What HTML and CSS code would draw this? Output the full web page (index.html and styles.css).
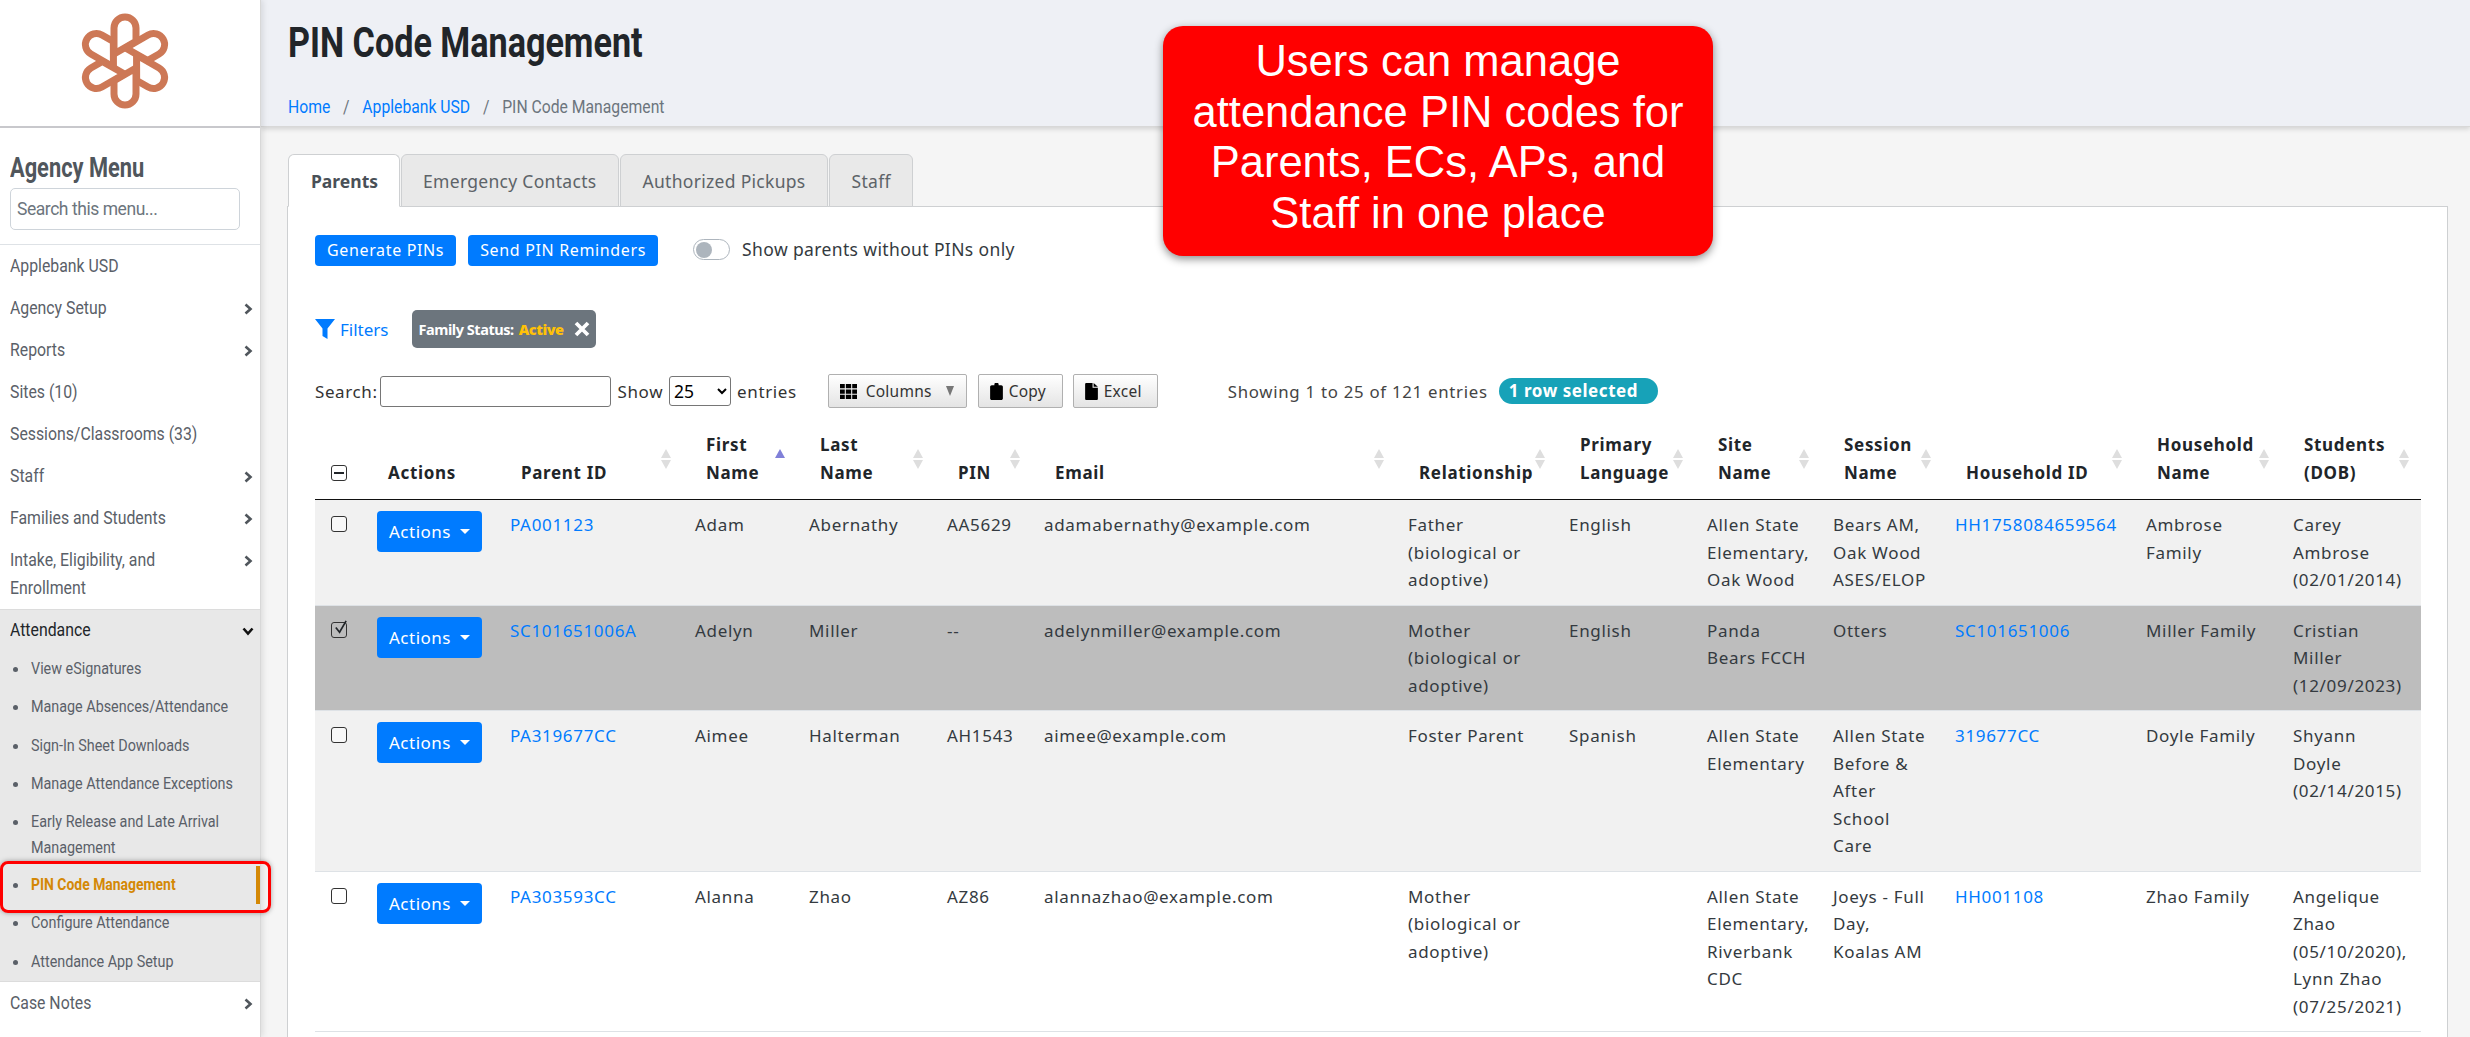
FILE: index.html
```html
<!DOCTYPE html>
<html lang="en">
<head>
<meta charset="utf-8">
<title>PIN Code Management</title>
<link rel="stylesheet" href="styles.css">
</head>
<body>
<div class="page">
  <aside class="sidebar">
    <div class="logo">
      <svg class="logo-svg" viewBox="-50 -50 100 100" aria-hidden="true">
        <g class="petals">
          <path d="M-11,-7 V-33 A11 11 0 0 1 11,-33 V-19.800 Z"/>
          <path transform="rotate(60)" d="M-11,-7 V-33 A11 11 0 0 1 11,-33 V-19.800 Z"/>
          <path transform="rotate(120)" d="M-11,-7 V-33 A11 11 0 0 1 11,-33 V-19.800 Z"/>
          <path transform="rotate(180)" d="M-11,-7 V-33 A11 11 0 0 1 11,-33 V-19.800 Z"/>
          <path transform="rotate(240)" d="M-11,-7 V-33 A11 11 0 0 1 11,-33 V-19.800 Z"/>
          <path transform="rotate(300)" d="M-11,-7 V-33 A11 11 0 0 1 11,-33 V-19.800 Z"/>
        </g>
      </svg>
    </div>
    <div class="menu-head">
      <div class="menu-title">Agency Menu</div>
      <input class="menu-search" type="text" placeholder="Search this menu...">
    </div>
    <nav class="menu">
      <a class="item"><span class="cn">Applebank USD</span></a>
      <a class="item has-chev"><span class="cn">Agency Setup</span><svg class="chev" viewBox="0 0 10 12"><path d="M2.5 1.5 7.5 6 2.5 10.5"/></svg></a>
      <a class="item has-chev"><span class="cn">Reports</span><svg class="chev" viewBox="0 0 10 12"><path d="M2.5 1.5 7.5 6 2.5 10.5"/></svg></a>
      <a class="item"><span class="cn">Sites (10)</span></a>
      <a class="item"><span class="cn">Sessions/Classrooms (33)</span></a>
      <a class="item has-chev"><span class="cn">Staff</span><svg class="chev" viewBox="0 0 10 12"><path d="M2.5 1.5 7.5 6 2.5 10.5"/></svg></a>
      <a class="item has-chev"><span class="cn">Families and Students</span><svg class="chev" viewBox="0 0 10 12"><path d="M2.5 1.5 7.5 6 2.5 10.5"/></svg></a>
      <a class="item has-chev multi"><span class="cn item-label">Intake, Eligibility, and Enrollment</span><svg class="chev" viewBox="0 0 10 12"><path d="M2.5 1.5 7.5 6 2.5 10.5"/></svg></a>
      <div class="group">
        <a class="item group-head"><span class="cn">Attendance</span><svg class="chev chev-dark" viewBox="0 0 12 10"><path d="M1.5 2.5 6 7.5 10.5 2.5"/></svg></a>
        <ul class="sub">
          <li><span class="cn-sub">View eSignatures</span></li>
          <li><span class="cn-sub">Manage Absences/Attendance</span></li>
          <li><span class="cn-sub">Sign-In Sheet Downloads</span></li>
          <li><span class="cn-sub">Manage Attendance Exceptions</span></li>
          <li><span class="cn-sub">Early Release and Late Arrival Management</span></li>
          <li class="current"><span class="cn-sub">PIN Code Management</span></li>
          <li><span class="cn-sub">Configure Attendance</span></li>
          <li><span class="cn-sub">Attendance App Setup</span></li>
        </ul>
      </div>
      <a class="item has-chev"><span class="cn">Case Notes</span><svg class="chev" viewBox="0 0 10 12"><path d="M2.5 1.5 7.5 6 2.5 10.5"/></svg></a>
    </nav>
    <div class="sidebar-mark"></div>
  </aside>

  <main class="main">
    <header class="topbar">
      <h1 class="title">PIN Code Management</h1>
      <div class="crumbs"><a>Home</a><span class="sep">/</span><a>Applebank USD</a><span class="sep">/</span><span class="crumb-now">PIN Code Management</span></div>
    </header>

    <section class="content">
      <div class="tabs">
        <div class="tab active">Parents</div>
        <div class="tab">Emergency Contacts</div>
        <div class="tab">Authorized Pickups</div>
        <div class="tab">Staff</div>
      </div>
      <div class="card">
        <div class="actions-row">
          <button class="btn-blue">Generate PINs</button>
          <button class="btn-blue">Send PIN Reminders</button>
          <span class="switch"><span class="knob"></span></span>
          <span class="switch-label">Show parents without PINs only</span>
        </div>
        <div class="filter-row">
          <a class="filters"><svg class="funnel" viewBox="0 0 20 20"><path d="M0 0H20L12.5 9.5V20L7.5 17V9.5Z"/></svg>Filters</a>
          <span class="chip">Family Status: <b class="chip-val">Active</b><svg class="chip-x" viewBox="0 0 12 12"><path d="M1.5 1.5 10.500 10.500M10.500 1.500 1.500 10.500"/></svg></span>
        </div>
        <div class="dt-row">
          <label class="dt-label">Search:</label>
          <input class="dt-search" type="text">
          <label class="dt-label dt-show">Show</label>
          <select class="dt-select"><option>25</option></select>
          <label class="dt-label dt-entries">entries</label>
          <button class="dt-btn dt-columns"><svg class="ico" viewBox="0 0 16 14"><path d="M0 0H4.500V4H0ZM5.500 0H10.500V4H5.500ZM11.500 0H16V4H11.500ZM0 5H4.500V9H0ZM5.500 5H10.500V9H5.500ZM11.500 5H16V9H11.500ZM0 10H4.500V14H0ZM5.500 10H10.500V14H5.500ZM11.500 10H16V14H11.500Z"/></svg>Columns<i class="dt-caret"></i></button>
          <button class="dt-btn dt-copy"><svg class="ico ico-small" viewBox="0 0 12 16"><path d="M1.500 2H4V1.200C4 .5 4.500 0 5.200 0H6.800C7.500 0 8 .5 8 1.200V2H10.500C11.300 2 12 2.700 12 3.500V14.500C12 15.300 11.300 16 10.500 16H1.500C.7 16 0 15.300 0 14.500V3.500C0 2.700 .7 2 1.500 2Z"/></svg>Copy</button>
          <button class="dt-btn dt-excel"><svg class="ico ico-small" viewBox="0 0 12 16"><path d="M0 1.200C0 .5 .5 0 1.200 0H7V4.500H12V14.800C12 15.500 11.500 16 10.800 16H1.200C.5 16 0 15.500 0 14.800ZM8 0 12 3.500H8Z"/></svg>Excel</button>
          <span class="dt-info">Showing 1 to 25 of 121 entries</span>
          <span class="pill">1 row selected</span>
        </div>
        <table class="grid">
          <colgroup>
            <col class="c0"><col class="c1"><col class="c2"><col class="c3"><col class="c4"><col class="c5"><col class="c6"><col class="c7"><col class="c8"><col class="c9"><col class="c10"><col class="c11"><col class="c12"><col class="c13">
          </colgroup>
          <thead>
            <tr>
              <th class="th-check"><span class="cb cb-minus"></span></th>
              <th>Actions</th>
              <th>Parent ID<i class="sort"></i></th>
              <th>First Name<i class="sort sort-asc"></i></th>
              <th>Last Name<i class="sort"></i></th>
              <th>PIN<i class="sort"></i></th>
              <th class="th-email">Email<i class="sort"></i></th>
              <th>Relationship<i class="sort"></i></th>
              <th>Primary Language<i class="sort"></i></th>
              <th>Site Name<i class="sort"></i></th>
              <th>Session Name<i class="sort"></i></th>
              <th>Household ID<i class="sort"></i></th>
              <th>Household Name<i class="sort"></i></th>
              <th>Students (DOB)<i class="sort"></i></th>
            </tr>
          </thead>
          <tbody>
            <tr class="odd">
              <td class="td-check"><span class="cb"></span></td>
              <td class="td-act"><button class="btn-act">Actions<i class="caret"></i></button></td>
              <td><a>PA001123</a></td><td>Adam</td><td>Abernathy</td><td>AA5629</td><td>adamabernathy@example.com</td>
              <td>Father (biological or adoptive)</td><td>English</td><td>Allen State Elementary, Oak Wood</td><td class="td-session">Bears AM, Oak Wood ASES/ELOP</td><td><a>HH1758084659564</a></td><td>Ambrose Family</td><td>Carey Ambrose (02/01/2014)</td>
            </tr>
            <tr class="selected">
              <td class="td-check"><span class="cb cb-tick"><svg class="tick" viewBox="0 0 16 16"><path d="M3 8 7 13 14 1"/></svg></span></td>
              <td class="td-act"><button class="btn-act">Actions<i class="caret"></i></button></td>
              <td><a>SC101651006A</a></td><td>Adelyn</td><td>Miller</td><td>--</td><td>adelynmiller@example.com</td>
              <td>Mother (biological or adoptive)</td><td>English</td><td>Panda Bears FCCH</td><td class="td-session">Otters</td><td><a>SC101651006</a></td><td>Miller Family</td><td>Cristian Miller (12/09/2023)</td>
            </tr>
            <tr class="odd">
              <td class="td-check"><span class="cb"></span></td>
              <td class="td-act"><button class="btn-act">Actions<i class="caret"></i></button></td>
              <td><a>PA319677CC</a></td><td>Aimee</td><td>Halterman</td><td>AH1543</td><td>aimee@example.com</td>
              <td>Foster Parent</td><td>Spanish</td><td>Allen State Elementary</td><td class="td-session">Allen State Before &amp; After School Care</td><td><a>319677CC</a></td><td>Doyle Family</td><td>Shyann Doyle (02/14/2015)</td>
            </tr>
            <tr>
              <td class="td-check"><span class="cb"></span></td>
              <td class="td-act"><button class="btn-act">Actions<i class="caret"></i></button></td>
              <td><a>PA303593CC</a></td><td>Alanna</td><td>Zhao</td><td>AZ86</td><td>alannazhao@example.com</td>
              <td>Mother (biological or adoptive)</td><td></td><td>Allen State Elementary, Riverbank CDC</td><td class="td-session">Joeys - Full Day, Koalas AM</td><td><a>HH001108</a></td><td>Zhao Family</td><td>Angelique Zhao (05/10/2020), Lynn Zhao (07/25/2021)</td>
            </tr>
          </tbody>
        </table>
      </div>
    </section>
  </main>
</div>
<div class="callout">Users can manage attendance PIN codes for Parents, ECs, APs, and Staff in one place</div>
</body>
</html>
```
FILE: styles.css
```css
* { box-sizing: border-box; }
html, body { margin: 0; height: 100%; overflow: hidden; }
body { font-family: "Noto Sans", sans-serif; font-size: 16px; color: #212529; background: #f5f5f5; }
a { color: #007bff; text-decoration: none; }
.page { display: flex; height: 1037px; position: relative; }

/* sidebar: the reference uses a condensed cut, so the Roboto text is narrowed */
.sidebar { width: 261px; flex: none; background: #fff; border-right: 1px solid #d8d8d8; box-shadow: 2px 0 6px rgba(0,0,0,.1); font-family: "Roboto", sans-serif; position: relative; z-index: 2; }
.logo { height: 128px; border-bottom: 2px solid #c8c8cc; display: flex; justify-content: center; align-items: flex-start; padding-top: 11px; }
.logo-svg { width: 100px; height: 100px; margin-right: 10px; }
.petals path { fill: none; stroke: #cd7856; stroke-width: 7; stroke-linejoin: round; }
.menu-head { padding: 25px 22px 14px 10px; border-bottom: 1px solid #dee2e6; }
.menu-title { font-size: 27px; font-weight: 700; color: #50565c; line-height: 30px; transform: scaleX(.808); transform-origin: 0 50%; white-space: nowrap; margin-bottom: 5px; }
.menu-search { width: 230px; height: 42px; border: 1px solid #ced4da; border-radius: 5px; padding: 0 6px; font: 400 17.5px "Roboto", sans-serif; letter-spacing: -.45px; display: block; }
.menu-search::placeholder { color: #6c757d; opacity: 1; }
.menu { display: block; }
.item { display: flex; justify-content: space-between; align-items: center; min-height: 42px; padding: 0 6px 0 10px; font-size: 18.5px; color: #5a6068; line-height: 28px; }
.cn { display: inline-block; transform: scaleX(.855); transform-origin: 0 50%; white-space: nowrap; }
.item.multi { padding-top: 7px; padding-bottom: 7px; align-items: flex-start; }
.item-label { width: 222px; white-space: normal; margin-right: -25px; }
.chev { width: 10px; height: 12px; flex: none; margin-top: 1px; margin-right: 1px; fill: none; stroke: #50565c; stroke-width: 2.6; }
.multi .chev { margin-top: 9px; }
.group { background: #e8e8e8; border-top: 1px solid #dcdcdc; border-bottom: 1px solid #dcdcdc; }
.group-head { color: #212529; min-height: 40px; }
.chev-dark { width: 12px; height: 10px; margin-right: 0; stroke: #111; }
.sub { list-style: none; margin: 0; padding: 0; }
.sub li { position: relative; padding: 6px 0 6px 30.500px; font-size: 16.8px; line-height: 25.500px; min-height: 38.3px; color: #5a6068; }
.cn-sub { display: block; width: 262px; transform: scaleX(.855); transform-origin: 0 50%; }
.sub li::before { content: ""; position: absolute; left: 12.500px; top: 17px; width: 5px; height: 5px; border-radius: 50%; background: #5a6068; }
.sub li.current { color: #d48806; font-weight: 700; }
.sub li.current .cn-sub { transform: scaleX(.83); }
.sub li.current::after { content: ""; position: absolute; right: 0; top: 0; bottom: 0; width: 4px; background: #d48806; }
.sidebar-mark { position: absolute; left: 0; top: 861px; width: 271px; height: 52px; border: 3px solid #f00; border-radius: 8px; box-shadow: 0 0 5px rgba(0,0,0,.35); pointer-events: none; }

/* main */
.main { flex: 1; min-width: 0; }
.topbar { height: 127px; background: #eef0f5; box-shadow: 0 2px 5px rgba(0,0,0,.15); padding: 20px 27px 0; border-bottom: 1px solid #d8d8d8; }
.title { margin: 0; font: 700 42px/46px "Roboto", sans-serif; transform: scaleX(.813); transform-origin: 0 50%; white-space: nowrap; color: #212529; }
.crumbs { margin-top: 29px; font: 400 18.5px/24px "Roboto", sans-serif; display: flex; transform: scaleX(.85); transform-origin: 0 50%; white-space: nowrap; }
.sep { color: #6c757d; padding: 0 15px; }
.crumb-now { color: #6c757d; }
.content { padding: 27px 22px 0 26px; }
.tabs { display: flex; height: 53px; padding-left: 1px; }
.tab { padding: 0 21.500px; line-height: 52px; border: 1px solid #ced0d2; border-bottom: 1px solid #ced0d2; border-radius: 6px 6px 0 0; background: #e9e9e9; color: #5d6368; margin-right: 1px; font-size: 17.5px; letter-spacing: .3px; }
.tab.active { padding: 0 20.500px 0 22px; background: #fff; color: #495057; font-weight: 700; border-bottom-color: #fff; position: relative; z-index: 1; letter-spacing: 0; }
.card { margin-top: -1px; background: #fff; border: 1px solid #ced0d2; padding: 27px 27px 0; height: 860px; }

.actions-row { display: flex; align-items: center; height: 32px; }
.btn-blue { height: 31px; padding: 0 12px; border: 0; border-radius: 4px; background: #007bff; color: #fff; font: 400 16px "Noto Sans", sans-serif; letter-spacing: .65px; margin-right: 12px; }
.switch { width: 37px; height: 21px; border: 1px solid #adb5bd; border-radius: 11px; margin-left: 23px; margin-top: -2px; padding: 2px; background: #fff; }
.knob { display: block; width: 16px; height: 16px; border-radius: 50%; background: #adb5bd; }
.switch-label { margin-left: 12px; margin-top: -2px; font-size: 17.5px; letter-spacing: .37px; color: #343a40; }
.filter-row { display: flex; align-items: center; margin-top: 44px; height: 38px; }
.filters { display: flex; align-items: center; font-size: 17px; }
.funnel { width: 20px; height: 20px; fill: #007bff; margin-right: 5px; }
.chip { margin-left: 24px; background: #6c757d; color: #fff; height: 38px; border-radius: 5px; padding: 0 6px 0 6px; display: inline-flex; align-items: center; font: 700 14.5px "Noto Sans", sans-serif; letter-spacing: -.45px; }
.chip-val { color: #ffc107; margin-left: 5px; }
.chip-x { width: 16px; height: 16px; margin-left: 10px; stroke: #fff; stroke-width: 2.800; fill: none; }
.dt-row { display: flex; align-items: center; margin-top: 26px; height: 34px; font-size: 17.5px; color: #333; }
.dt-label { font-size: 17px; letter-spacing: .6px; }
.dt-search { width: 231px; height: 31px; margin-left: 2px; border: 1px solid #767676; border-radius: 3px; }
.dt-show { margin-left: 7px; }
.dt-select { width: 62px; height: 30px; margin-left: 6px; font: 400 17.5px "Noto Sans", sans-serif; border: 1px solid #767676; border-radius: 3px; background: #fff; }
.dt-entries { margin-left: 6px; }
.dt-btn { height: 34px; border: 1px solid #b0b0b0; border-radius: 2px; background: linear-gradient(#fff, #e4e4e4); font: 400 15.5px "Noto Sans", sans-serif; letter-spacing: .25px; color: #333; display: inline-flex; align-items: center; padding: 0 11px; }
.dt-columns { margin-left: 31px; width: 139px; }
.dt-copy { margin-left: 11px; width: 85px; }
.dt-excel { margin-left: 10px; width: 85px; }
.ico { width: 17px; height: 15px; fill: #000; margin-right: 9px; flex: none; }
.ico-small { width: 13px; height: 17px; margin-right: 6px; }
.dt-caret { width: 0; height: 0; margin-left: 14px; border-left: 4.500px solid transparent; border-right: 4.500px solid transparent; border-top: 10px solid #777; }
.dt-info { margin-left: 70px; font-size: 16.8px; letter-spacing: .73px; color: #444; }
.pill { margin-left: 11px; background: #17a2b8; color: #fff; font-weight: 700; font-size: 17px; letter-spacing: .55px; height: 26px; line-height: 26px; border-radius: 13px; padding: 0 20px 0 10px; }

/* table */
.grid { table-layout: fixed; width: 2106px; border-collapse: collapse; margin-top: 11px; line-height: 27.5px; font-size: 17px; letter-spacing: .68px; }
.c0 { width: 50px; } .c1 { width: 133px; } .c2 { width: 185px; } .c3 { width: 114px; } .c4 { width: 138px; } .c5 { width: 97px; } .c6 { width: 364px; }
.c7 { width: 161px; } .c8 { width: 138px; } .c9 { width: 126px; } .c10 { width: 122px; } .c11 { width: 191px; } .c12 { width: 147px; } .c13 { width: 140px; }
th { position: relative; text-align: left; vertical-align: bottom; padding: 12px 24px 13px 23px; border-bottom: 1px solid #111; font-weight: 700; color: #212529; }
.th-check { padding-left: 16px; padding-right: 0; }
td { vertical-align: top; padding: 11px 12px; border-bottom: 1px solid #dee2e6; color: #343a40; }
.td-check { padding-left: 16px; padding-right: 0; }
.td-act { padding-top: 11px; padding-bottom: 0; }
.td-session { padding-right: 13px; }
tr.odd td { background: #f1f1f1; }
tr.selected td { background: #bdbdbd; }
.cb { display: block; width: 16px; height: 16px; border: 1px solid #333; border-radius: 3px; background: #fff; position: relative; margin-top: 5px; }
tr.odd .cb { background: #f8f8f8; }
.cb-minus::after { content: ""; position: absolute; left: 2px; right: 2px; top: 6px; height: 2px; background: #212529; }
.th-check .cb { margin-bottom: 5px; }
.cb-tick { background: transparent; }
.tick { position: absolute; left: 1px; top: -3px; width: 15px; height: 15px; fill: none; stroke: #212529; stroke-width: 1.800; }
.btn-act { height: 41px; width: 105px; background: #007bff; color: #fff; border: 0; border-radius: 4px; font: 400 17px "Noto Sans", sans-serif; letter-spacing: .5px; display: flex; align-items: center; padding: 0 12px; }
.caret { margin-left: 9px; width: 0; height: 0; border-left: 5px solid transparent; border-right: 5px solid transparent; border-top: 5px solid #fff; }
.sort { position: absolute; right: 11px; bottom: 30px; width: 11px; height: 20px; }
.sort::before, .sort::after { content: ""; position: absolute; left: 0; border-left: 5.5px solid transparent; border-right: 5.5px solid transparent; }
.sort::before { top: 0; border-bottom: 9px solid #dedede; }
.sort::after { bottom: 0; border-top: 9px solid #dedede; }
.sort-asc::before { border-bottom-color: #8080d8; }
.sort-asc::after { border-top-color: #fff; }

/* callout */
.callout { position: absolute; left: 1163px; top: 26px; width: 550px; height: 230px; background: #f00; color: #fff; border-radius: 20px; box-shadow: 0 3px 8px rgba(0,0,0,.45); font: 400 43.5px/50.5px "Liberation Sans", sans-serif; text-align: center; padding: 10px 20px 0; z-index: 5; }
```
